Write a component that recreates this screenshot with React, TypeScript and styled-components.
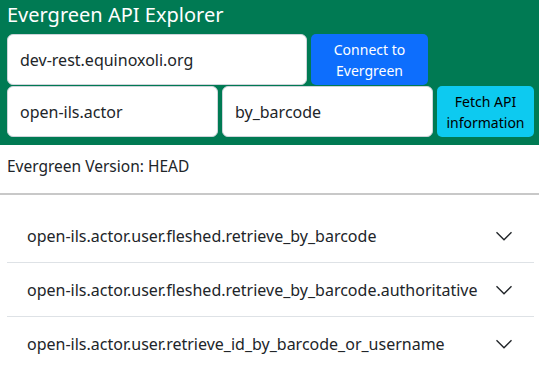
import React, { FC } from 'react';
import styled, { createGlobalStyle } from 'styled-components';

const GlobalStyle = createGlobalStyle`
	body {
		margin: 0;
		font-family: 'Noto Sans', sans-serif;
		color: #212529;
		background: #fff;
	}
	* {
		box-sizing: border-box;
	}
`;

const Header = styled.header`
	background-color: #007a53;
	padding: 0 5px 8px 7px;
`;

const Title = styled.h1`
	margin: 0;
	padding-top: 1px;
	height: 34px;
	font-size: 20px;
	font-weight: 400;
	line-height: 28px;
	color: #fff;
`;

const FormRow = styled.div`
	display: flex;
	align-items: center;
	gap: 4px;
	& + & {
		margin-top: 1px;
	}
`;

const TextInput = styled.input<{ $width: number }>`
	width: ${(p) => p.$width}px;
	height: 51px;
	padding: 0 12px;
	border: 1px solid #ced4da;
	border-radius: 6px;
	font-family: 'Noto Sans', sans-serif;
	font-size: 16px;
	color: #212529;
	background: #fff;
	outline: none;
`;

const Button = styled.button<{ $variant: 'primary' | 'info'; $width: number }>`
	width: ${(p) => p.$width}px;
	height: 51px;
	padding: 0 6px;
	border: none;
	border-radius: 5px;
	font-family: 'Noto Sans', sans-serif;
	font-size: 14px;
	line-height: 21px;
	background-color: ${(p) => (p.$variant === 'primary' ? '#0d6efd' : '#0dcaf0')};
	color: ${(p) => (p.$variant === 'primary' ? '#fff' : '#000')};
	cursor: pointer;
`;

const Version = styled.p`
	margin: 0;
	padding: 10px 7px 16px;
	font-size: 15.5px;
	line-height: 22px;
	border-bottom: 2px solid #c8c8c8;
`;

const Accordion = styled.div`
	margin: 14px 5px 0 7px;
`;

const Item = styled.div`
	border-bottom: 1px solid #dee2e6;
	&:last-child {
		border-bottom: none;
	}
`;

const ItemButton = styled.button`
	display: flex;
	align-items: center;
	justify-content: space-between;
	width: 100%;
	height: 53px;
	padding: 0 20px;
	border: none;
	background: #fff;
	font-family: 'Noto Sans', sans-serif;
	font-size: 16px;
	color: #212529;
	text-align: left;
	cursor: pointer;
`;

const Chevron: FC = () => (
	<svg width="20" height="20" viewBox="0 0 16 16" fill="none">
		<path d="M2 5l6 6 6-6" stroke="#212529" strokeWidth="1.1" />
	</svg>
);

const methods = [
	'open-ils.actor.user.fleshed.retrieve_by_barcode',
	'open-ils.actor.user.fleshed.retrieve_by_barcode.authoritative',
	'open-ils.actor.user.retrieve_id_by_barcode_or_username',
];

const App: FC = () => {
	return (
		<>
			<GlobalStyle />
			<Header>
				<Title>Evergreen API Explorer</Title>
				<FormRow>
					<TextInput $width={300} defaultValue="dev-rest.equinoxoli.org" />
					<Button $variant="primary" $width={117}>
						Connect to Evergreen
					</Button>
				</FormRow>
				<FormRow>
					<TextInput $width={211} defaultValue="open-ils.actor" />
					<TextInput $width={211} defaultValue="by_barcode" />
					<Button $variant="info" $width={97}>
						Fetch API information
					</Button>
				</FormRow>
			</Header>
			<Version>Evergreen Version: HEAD</Version>
			<Accordion>
				{methods.map((m) => (
					<Item key={m}>
						<ItemButton>
							<span>{m}</span>
							<Chevron />
						</ItemButton>
					</Item>
				))}
			</Accordion>
		</>
	);
};

export default App;
